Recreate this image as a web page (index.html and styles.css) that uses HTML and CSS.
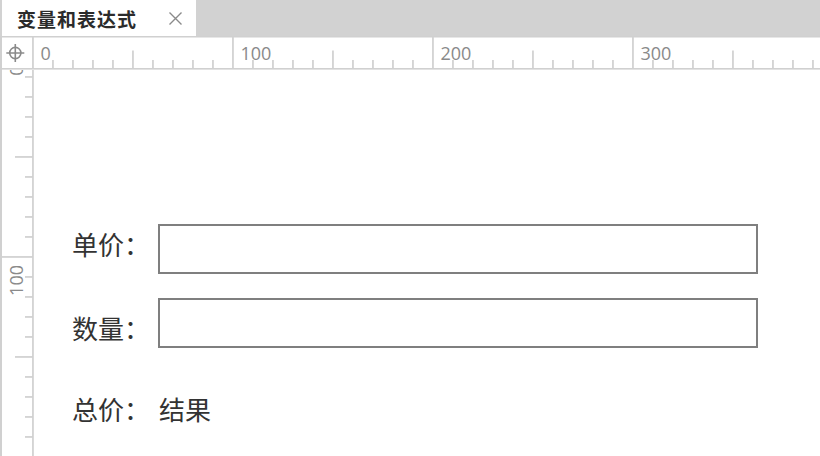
FILE: index.html
```html
<!DOCTYPE html>
<html lang="zh-CN">
<head>
<meta charset="utf-8">
<title>变量和表达式</title>
<link rel="stylesheet" href="styles.css">
</head>
<body>
<div class="app">
  <div class="tabbar">
    <div class="tab">
      <span class="tab-title">变量和表达式</span>
      <svg class="tab-close" width="13" height="13" viewBox="0 0 13 13" aria-label="关闭">
        <path d="M0.5 0.5 L12.5 12.5 M12.5 0.5 L0.5 12.5" stroke="#8a8a8a" stroke-width="1.4" fill="none"/>
      </svg>
    </div>
  </div>

  <svg class="ruler-top" width="820" height="34" viewBox="0 0 820 34">
    <rect x="0" y="0" width="820" height="1.5" fill="#d0d0d0"/>
    <rect x="0" y="32" width="820" height="1.6" fill="#d0d0d0"/>
    <rect x="0" y="0" width="2" height="34" fill="#d0d0d0"/>
    <g fill="#d0d0d0">
      <rect x="32.1" y="0" width="1.7" height="33"/>
      <rect x="52.1" y="24" width="1.7" height="8"/>
      <rect x="72.1" y="24" width="1.7" height="8"/>
      <rect x="92.1" y="24" width="1.7" height="8"/>
      <rect x="112.1" y="24" width="1.7" height="8"/>
      <rect x="132.1" y="14.5" width="1.7" height="17.5"/>
      <rect x="152.1" y="24" width="1.7" height="8"/>
      <rect x="172.1" y="24" width="1.7" height="8"/>
      <rect x="192.1" y="24" width="1.7" height="8"/>
      <rect x="212.1" y="24" width="1.7" height="8"/>
      <rect x="232.1" y="0" width="1.7" height="33"/>
      <rect x="252.1" y="24" width="1.7" height="8"/>
      <rect x="272.1" y="24" width="1.7" height="8"/>
      <rect x="292.1" y="24" width="1.7" height="8"/>
      <rect x="312.1" y="24" width="1.7" height="8"/>
      <rect x="332.1" y="14.5" width="1.7" height="17.5"/>
      <rect x="352.1" y="24" width="1.7" height="8"/>
      <rect x="372.1" y="24" width="1.7" height="8"/>
      <rect x="392.1" y="24" width="1.7" height="8"/>
      <rect x="412.1" y="24" width="1.7" height="8"/>
      <rect x="432.1" y="0" width="1.7" height="33"/>
      <rect x="452.1" y="24" width="1.7" height="8"/>
      <rect x="472.1" y="24" width="1.7" height="8"/>
      <rect x="492.1" y="24" width="1.7" height="8"/>
      <rect x="512.1" y="24" width="1.7" height="8"/>
      <rect x="532.1" y="14.5" width="1.7" height="17.5"/>
      <rect x="552.1" y="24" width="1.7" height="8"/>
      <rect x="572.1" y="24" width="1.7" height="8"/>
      <rect x="592.1" y="24" width="1.7" height="8"/>
      <rect x="612.1" y="24" width="1.7" height="8"/>
      <rect x="632.1" y="0" width="1.7" height="33"/>
      <rect x="652.1" y="24" width="1.7" height="8"/>
      <rect x="672.1" y="24" width="1.7" height="8"/>
      <rect x="692.1" y="24" width="1.7" height="8"/>
      <rect x="712.1" y="24" width="1.7" height="8"/>
      <rect x="732.1" y="14.5" width="1.7" height="17.5"/>
      <rect x="752.1" y="24" width="1.7" height="8"/>
      <rect x="772.1" y="24" width="1.7" height="8"/>
      <rect x="792.1" y="24" width="1.7" height="8"/>
      <rect x="812.1" y="24" width="1.7" height="8"/>
    </g>
    <g class="ruler-label">
      <text x="40.5" y="23.5">0</text>
      <text x="240.5" y="23.5">100</text>
      <text x="440.5" y="23.5">200</text>
      <text x="640.5" y="23.5">300</text>
    </g>
    <g stroke="#8a8a8a" stroke-width="1.6" fill="none">
      <circle cx="15.3" cy="17" r="5.6"/>
      <path d="M6.3 17 H24.3 M15.3 8 V26"/>
    </g>
  </svg>

  <div class="workspace">
    <svg class="ruler-left" width="34" height="386" viewBox="0 0 34 386">
      <rect x="0" y="0" width="2" height="386" fill="#d0d0d0"/>
      <rect x="32.1" y="0" width="1.7" height="386" fill="#d0d0d0"/>
      <g fill="#d0d0d0">
        <rect x="25" y="6.1" width="8" height="1.7"/>
        <rect x="25" y="26.1" width="8" height="1.7"/>
        <rect x="25" y="46.1" width="8" height="1.7"/>
        <rect x="25" y="66.1" width="8" height="1.7"/>
        <rect x="15" y="86.1" width="18" height="1.7"/>
        <rect x="25" y="106.1" width="8" height="1.7"/>
        <rect x="25" y="126.1" width="8" height="1.7"/>
        <rect x="25" y="146.1" width="8" height="1.7"/>
        <rect x="25" y="166.1" width="8" height="1.7"/>
        <rect x="0" y="186.1" width="33" height="1.7"/>
        <rect x="25" y="206.1" width="8" height="1.7"/>
        <rect x="25" y="226.1" width="8" height="1.7"/>
        <rect x="25" y="246.1" width="8" height="1.7"/>
        <rect x="25" y="266.1" width="8" height="1.7"/>
        <rect x="15" y="286.1" width="18" height="1.7"/>
        <rect x="25" y="306.1" width="8" height="1.7"/>
        <rect x="25" y="326.1" width="8" height="1.7"/>
        <rect x="25" y="346.1" width="8" height="1.7"/>
        <rect x="25" y="366.1" width="8" height="1.7"/>
      </g>
      <g class="ruler-label" text-anchor="end">
        <text transform="translate(23 -4.5) rotate(-90)">0</text>
        <text transform="translate(23 195) rotate(-90)">100</text>
      </g>
    </svg>

    <div class="canvas">
      <div class="form">
        <div class="label label-first">单价：</div>
        <div class="input-box"></div>
        <div class="label label-second">数量：</div>
        <div class="input-box"></div>
        <div class="label label-third">总价：</div>
        <div class="value">结果</div>
      </div>
    </div>
  </div>
</div>
</body>
</html>
```

FILE: styles.css
```css
html, body {
  margin: 0;
  padding: 0;
  background: #ffffff;
}

body {
  width: 820px;
  height: 456px;
  overflow: hidden;
  font-family: "Noto Sans CJK SC", "Noto Sans", sans-serif;
  color: #333333;
}

.app {
  display: flex;
  flex-direction: column;
  width: 820px;
  height: 456px;
}

.tabbar {
  height: 36px;
  background: #d2d2d2;
  padding-left: 2px;
  display: flex;
  flex: none;
}

.tab {
  width: 194px;
  height: 36px;
  background: #ffffff;
  display: flex;
  align-items: center;
  padding: 0 14px 0 15px;
  box-sizing: border-box;
}

.tab-title {
  font-size: 19px;
  line-height: 19px;
  font-weight: 700;
  letter-spacing: 1px;
  color: #2b2b2b;
  white-space: nowrap;
}

.tab-close {
  margin-left: auto;
  margin-top: 1px;
  display: block;
}

.ruler-top {
  display: block;
  flex: none;
}

.ruler-label {
  font-family: "Open Sans", "DejaVu Sans", sans-serif;
  font-size: 18px;
  fill: #8a8a8a;
}

.workspace {
  flex: 1;
  display: flex;
  min-height: 0;
}

.ruler-left {
  display: block;
  flex: none;
}

.canvas {
  flex: 1;
  overflow: hidden;
}

.form {
  display: grid;
  grid-template-columns: 86px 600px;
  grid-template-rows: 50px 50px auto;
  row-gap: 24px;
  padding: 154px 0 0 38px;
}

.label {
  font-size: 26px;
  line-height: 26px;
  color: #333333;
  white-space: nowrap;
}

.label-first {
  margin-top: 6.5px;
}

.label-second {
  margin-top: 16.5px;
}

.label-third {
  margin-top: 23.5px;
}

.value {
  font-size: 26px;
  line-height: 26px;
  color: #333333;
  margin-top: 23.5px;
  margin-left: 1px;
}

.input-box {
  box-sizing: border-box;
  border: 2px solid #7f7f7f;
  background: #ffffff;
}
```
